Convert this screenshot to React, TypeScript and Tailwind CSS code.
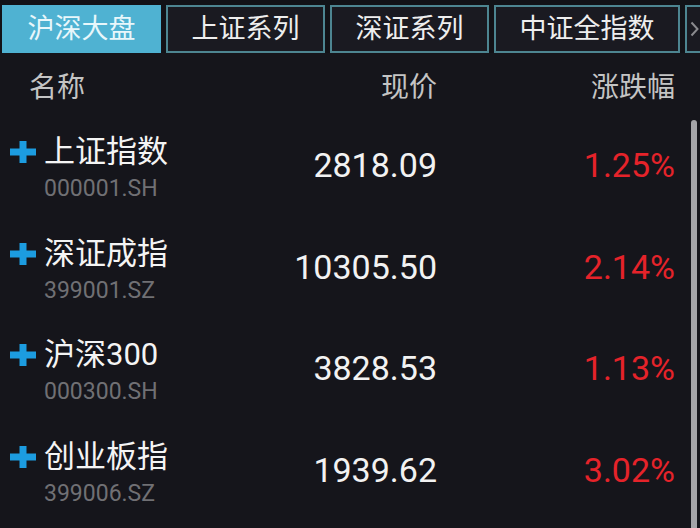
import React from "react";

type Row = { name: string; code: string; price: string; pct: string };

const rows: Row[] = [
  { name: "上证指数", code: "000001.SH", price: "2818.09", pct: "1.25%" },
  { name: "深证成指", code: "399001.SZ", price: "10305.50", pct: "2.14%" },
  { name: "沪深300", code: "000300.SH", price: "3828.53", pct: "1.13%" },
  { name: "创业板指", code: "399006.SZ", price: "1939.62", pct: "3.02%" },
];

const tabs = [
  { label: "上证系列", w: "w-[159px]" },
  { label: "深证系列", w: "w-[159px]" },
  { label: "中证全指数", w: "w-[186px]" },
];

function Plus() {
  return (
    <svg width="26" height="22" viewBox="0 0 26 22" className="shrink-0">
      <rect x="0" y="7.5" width="26" height="7" fill="#1c9ce0" />
      <rect x="9.5" y="0" width="7" height="22" fill="#1c9ce0" />
    </svg>
  );
}

export default function App() {
  return (
    <div className="relative w-[700px] h-[528px] overflow-hidden bg-[#15151b] font-['Roboto','Noto_Sans_CJK_SC',sans-serif]">
      {/* tab bar */}
      <div className="flex gap-[5px] pt-[5px] pl-[2px] h-[53px] bg-[#121217]">
        <div className="w-[159px] h-[48px] shrink-0 flex items-center justify-center bg-[#4fb2d2] text-[#e8f7fb] text-[27px]">
          沪深大盘
        </div>
        {tabs.map((t) => (
          <div
            key={t.label}
            className={`${t.w} h-[48px] shrink-0 flex items-center justify-center border-2 border-[#4d8591] bg-[#1a1a21] text-[#eeeeee] text-[27px]`}
          >
            {t.label}
          </div>
        ))}
        <div className="w-[30px] h-[48px] shrink-0 flex items-center pl-[3px] border-2 border-[#4d8591] bg-[#1a1a21]">
          <svg width="9" height="16" viewBox="0 0 9 16">
            <path d="M1.5 1.5 L7.5 8 L1.5 14.5" stroke="#8a8a8e" strokeWidth="2" fill="none" />
          </svg>
        </div>
      </div>

      {/* header */}
      <div className="grid grid-cols-[240px_187px_238px] pl-[10px] h-[70px] items-center text-[28px] text-[#c4c4c4]">
        <div className="pl-[19px]">名称</div>
        <div className="text-right">现价</div>
        <div className="text-right">涨跌幅</div>
      </div>

      {/* rows */}
      {rows.map((r) => (
        <div key={r.code} className="grid grid-cols-[240px_187px_238px] pl-[10px] h-[101.5px] items-start">
          <div className="pt-[9px] flex flex-col">
            <div className="flex items-center h-[40px]">
              <Plus />
              <span className="ml-[8px] text-[31px] leading-[40px] text-[#f4f4f4]">{r.name}</span>
            </div>
            <div className="pl-[34px] mt-[2px] text-[23px] leading-[30px] text-[#707074]">{r.code}</div>
          </div>
          <div className="mt-[22px] text-right text-[34px] leading-[40px] text-[#f2f2f2]">{r.price}</div>
          <div className="mt-[22px] text-right text-[34px] leading-[40px] text-[#e5232a]">{r.pct}</div>
        </div>
      ))}

      {/* scrollbar */}
      <div className="absolute left-[691px] top-[120px] w-[6px] h-[420px] rounded-t-[3px] bg-[#a4a4a8]" />
    </div>
  );
}
